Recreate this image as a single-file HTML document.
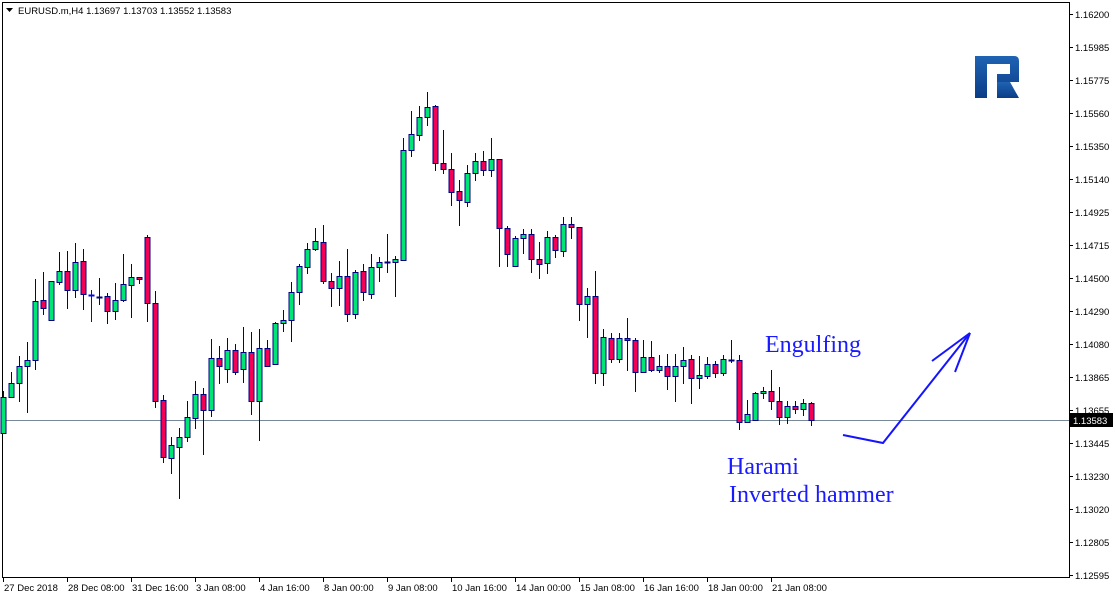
<!DOCTYPE html>
<html><head><meta charset="utf-8"><style>
html,body{margin:0;padding:0;background:#fff;width:1116px;height:598px;overflow:hidden}
svg{display:block}
.ax{font-family:"Liberation Sans",sans-serif;font-size:9.5px;fill:#000}
.an{font-family:"Liberation Serif",serif;font-size:24px;fill:#1a1aff}
</style></head><body>
<svg id="s" width="1116" height="598" xmlns="http://www.w3.org/2000/svg">
<defs><linearGradient id="lg" x1="0" y1="0" x2="0" y2="1"><stop offset="0" stop-color="#1f63b3"/><stop offset="1" stop-color="#0c3d86"/></linearGradient></defs>
<rect x="2.5" y="2.5" width="1067" height="575" fill="#fff" stroke="#000" stroke-width="1"/>
<text x="18" y="14" class="ax">EURUSD.m,H4  1.13697 1.13703 1.13552 1.13583</text>
<path d="M6,8 h7 l-3.5,4z" fill="#000"/>
<g fill="url(#lg)">
<path d="M975,56 H1014 Q1019,56 1019,61 V82 H997 V74 H1010 V64 H987 V98 H975 Z"/>
<path d="M997,82 H1010 L1019,98 H997 Z"/>
</g>
<line x1="2" y1="420.5" x2="1069" y2="420.5" stroke="#778899" stroke-width="1"/>
<g id="c"></g>
<g id="ax"></g>
<rect x="1070" y="413" width="43" height="14" fill="#000"/>
<text x="1073" y="424" class="ax" style="fill:#fff">1.13583</text>
<text x="765" y="352" class="an">Engulfing</text>
<text x="727" y="474" class="an">Harami</text>
<text x="729" y="502" class="an">Inverted hammer</text>
<g fill="none" stroke="#1414ff" stroke-width="2">
<polyline points="843,435 883,443 970,333"/>
<line x1="970" y1="333" x2="932" y2="361"/>
<line x1="970" y1="333" x2="955" y2="372"/>
</g>
</svg>
<script>
var d=[[391,397,433,433,'g'],[372,383,397,398,'g'],[356,366,383,402,'g'],[342,360,366,413,'g'],[279,301,360,370,'g'],[272,300,308,315,'r'],[281,281,320,320,'g'],[252,271,282,285,'g'],[251,271,290,309,'r'],[243,262,290,298,'g'],[249,261,294,310,'r'],[290,295,295,322,'b'],[278,297,297,305,'d'],[293,296,311,324,'r'],[283,300,311,320,'g'],[254,284,300,302,'g'],[264,277,285,318,'g'],[277,277,279,284,'r'],[235,237,303,322,'r'],[291,303,401,408,'r'],[395,400,457,463,'r'],[437,445,458,474,'g'],[428,437,447,499,'g'],[401,417,437,442,'g'],[381,394,418,429,'g'],[388,394,410,455,'r'],[339,358,410,417,'g'],[346,358,366,384,'r'],[338,350,369,383,'g'],[344,350,372,375,'r'],[327,352,369,383,'g'],[332,352,401,415,'r'],[329,348,401,441,'g'],[340,348,366,367,'r'],[322,323,364,364,'g'],[310,320,323,332,'g'],[282,292,320,342,'g'],[264,266,292,305,'g'],[243,249,267,274,'g'],[228,241,249,251,'g'],[225,242,281,284,'r'],[273,281,288,307,'r'],[261,276,288,306,'g'],[249,276,314,322,'r'],[270,272,314,319,'g'],[264,271,292,301,'r'],[254,267,294,299,'g'],[257,262,267,282,'g'],[234,262,262,273,'d'],[256,259,262,297,'g'],[138,150,260,260,'g'],[111,134,150,157,'g'],[106,117,135,141,'g'],[92,107,117,126,'g'],[105,106,163,171,'r'],[130,163,169,174,'r'],[153,169,192,206,'r'],[180,191,200,226,'r'],[165,173,202,207,'g'],[153,161,173,181,'g'],[151,161,170,176,'r'],[138,159,170,177,'g'],[159,159,228,267,'r'],[226,228,254,267,'r'],[236,238,266,266,'g'],[229,234,238,254,'g'],[229,234,259,273,'r'],[242,259,264,279,'r'],[231,237,263,274,'g'],[235,237,250,258,'r'],[217,224,251,257,'g'],[217,224,227,239,'r'],[227,227,304,321,'r'],[288,296,304,338,'g'],[271,296,373,384,'r'],[329,337,373,386,'g'],[333,338,359,363,'r'],[333,338,359,363,'g'],[318,338,340,371,'r'],[338,340,372,392,'r'],[340,357,372,372,'g'],[341,357,370,372,'r'],[355,366,370,373,'g'],[354,366,376,390,'r'],[354,366,376,402,'g'],[347,360,366,384,'g'],[355,359,378,404,'r'],[356,375,378,389,'g'],[357,364,376,379,'g'],[361,364,373,378,'r'],[355,359,373,376,'g'],[340,360,360,363,'d'],[355,360,422,430,'r'],[400,414,422,423,'g'],[392,393,420,420,'g'],[387,391,393,399,'g'],[370,391,401,410,'r'],[387,401,417,425,'r'],[401,406,417,424,'g'],[401,406,409,414,'r'],[399,403,409,416,'g'],[402,403,420,426,'r']];
var h='',N='#000080';
d.forEach(function(c,k){var x=3.5+8*k;var st=c[4]=='b'?'#0000ff':N;
h+='<line x1="'+x+'" y1="'+c[0]+'" x2="'+x+'" y2="'+c[3]+'" stroke="'+st+'" stroke-width="1"/>';
if(c[4]=='d'||c[4]=='b'||c[2]-c[1]<1){h+='<line x1="'+(x-3)+'" y1="'+(c[1]+0.5)+'" x2="'+(x+3)+'" y2="'+(c[1]+0.5)+'" stroke="'+st+'" stroke-width="2"/>';}
else{h+='<rect x="'+(x-2.5)+'" y="'+(c[1]+0.5)+'" width="5" height="'+(c[2]-c[1])+'" fill="'+(c[4]=='g'?'#00e676':'#f50057')+'" stroke="'+N+'" stroke-width="1"/>';}});
document.getElementById('c').innerHTML=h;
var p=['1.16200','1.15985','1.15775','1.15560','1.15350','1.15140','1.14925','1.14715','1.14500','1.14290','1.14080','1.13865','1.13655','1.13445','1.13230','1.13020','1.12805','1.12595'];
var a='';p.forEach(function(t,i){var y=Math.round(14+i*33);a+='<line x1="1069" y1="'+(y+0.5)+'" x2="1073" y2="'+(y+0.5)+'" stroke="#000"/><text x="1075" y="'+(y+4)+'" class="ax">'+t+'</text>';});
var tl=['27 Dec 2018','28 Dec 08:00','31 Dec 16:00','3 Jan 08:00','4 Jan 16:00','8 Jan 00:00','9 Jan 08:00','10 Jan 16:00','14 Jan 00:00','15 Jan 08:00','16 Jan 16:00','18 Jan 00:00','21 Jan 08:00'];
tl.forEach(function(t,i){var x=3+64*i;a+='<line x1="'+(x+0.5)+'" y1="577" x2="'+(x+0.5)+'" y2="582" stroke="#000"/><text x="'+(x+1)+'" y="591" class="ax">'+t+'</text>';});
document.getElementById('ax').innerHTML=a;
</script>
</body></html>
